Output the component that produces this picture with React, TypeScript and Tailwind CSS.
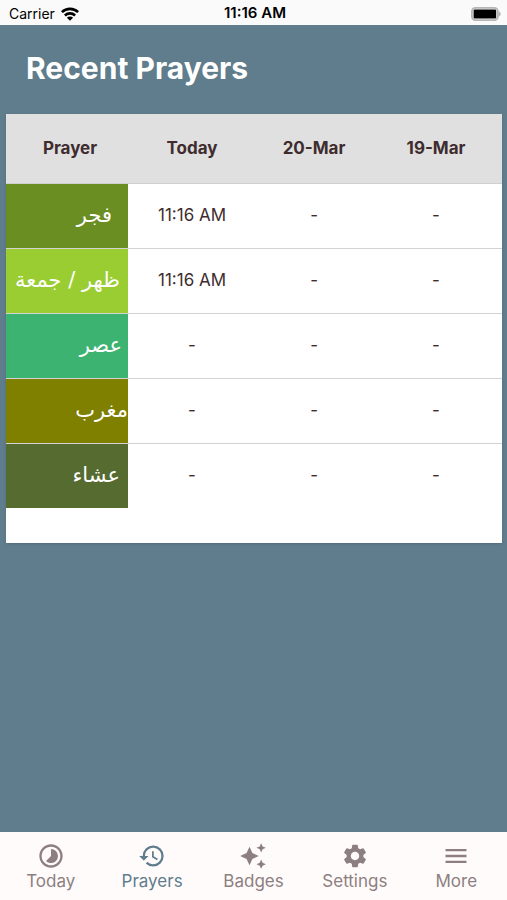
import clsx from "clsx";
import {
  MdAutoAwesome,
  MdHistory,
  MdMenu,
  MdSettings,
  MdTimelapse
} from "react-icons/md";

const days = ["Today", "20-Mar", "19-Mar"];

const prayers = [
  {
    name: "فجر",
    cell: "bg-[#6b8e23] pr-4",
    times: ["11:16 AM", "-", "-"]
  },
  {
    name: "ظهر / جمعة",
    cell: "bg-[#9acd32] pr-2",
    times: ["11:16 AM", "-", "-"]
  },
  {
    name: "عصر",
    cell: "bg-[#3cb371] pr-1.5",
    times: ["-", "-", "-"]
  },
  {
    name: "مغرب",
    cell: "bg-[#808000] pr-0",
    times: ["-", "-", "-"]
  },
  {
    name: "عشاء",
    cell: "bg-[#556b2f] pr-2",
    times: ["-", "-", "-"]
  }
];

const tabs = [
  { icon: MdTimelapse, label: "Today", href: "#today" },
  { icon: MdHistory, label: "Prayers", href: "#prayers" },
  { icon: MdAutoAwesome, label: "Badges", href: "#badges" },
  { icon: MdSettings, label: "Settings", href: "#settings" },
  { icon: MdMenu, label: "More", href: "#more" }
];

const WifiIcon = ({ className }: { className?: string }) => (
  <svg viewBox="0 0 18 14" className={className} aria-hidden="true">
    <g fill="none" stroke="currentColor" strokeWidth="2.6">
      <path d="M0.9 5.2a11.5 11.5 0 0 1 16.2 0" />
      <path d="M3.9 8.5a7.3 7.3 0 0 1 10.2 0" />
    </g>
    <path d="M9 13.8 5.9 10.7a4.4 4.4 0 0 1 6.2 0Z" fill="currentColor" />
  </svg>
);

const BatteryIcon = ({ className }: { className?: string }) => (
  <svg viewBox="0 0 30 14" className={className} aria-hidden="true">
    <rect
      x="0.9"
      y="0.9"
      width="26"
      height="12.2"
      rx="3.6"
      fill="#fafafa"
      stroke="#b5b5b5"
      strokeWidth="1.8"
    />
    <rect x="2.6" y="2.5" width="22.6" height="9" rx="1.2" fill="#000" />
    <path d="M27.8 4.6c2.6.8 2.6 4 0 4.8Z" fill="#b5b5b5" />
  </svg>
);

function StatusBar() {
  return (
    <div className="grid h-[25px] grid-cols-3 items-center bg-[#fafafa] pt-0.5 pr-1.5 pl-[9px] text-black">
      <div className="flex items-center gap-1.5 text-sm">
        Carrier
        <WifiIcon className="h-3.5 w-[18px]" />
      </div>
      <div className="text-center text-[15px] font-semibold">11:16 AM</div>
      <BatteryIcon className="h-3.5 w-[30px] justify-self-end" />
    </div>
  );
}

function PrayerTable() {
  return (
    <div className="bg-white pb-[35px] shadow-sm">
      <table className="w-full table-fixed border-collapse text-center text-[17px] text-[#3e2c2e]">
        <colgroup>
          <col className="w-[24.6%]" />
          <col className="w-[24.6%]" />
          <col className="w-[24.6%]" />
          <col />
        </colgroup>
        <thead>
          <tr className="h-[69px] border-b border-[#cfcfcf] bg-[#e0e0e0]">
            <th className="pl-1.5 font-bold">Prayer</th>
            {days.map((day) => (
              <th key={day} className="pl-1.5 font-bold last:pr-2">
                {day}
              </th>
            ))}
          </tr>
        </thead>
        <tbody>
          {prayers.map((prayer) => (
            <tr
              key={prayer.name}
              className="h-[65px] border-b border-[#d3d3d3] last:border-b-0"
            >
              <th
                dir="rtl"
                scope="row"
                className={clsx(
                  "text-right font-['DejaVu_Sans',sans-serif] text-[21px] font-normal whitespace-nowrap text-white",
                  prayer.cell
                )}
              >
                {prayer.name}
              </th>
              {prayer.times.map((time, i) => (
                <td key={i} className="pl-1.5 last:pr-2">
                  {time}
                </td>
              ))}
            </tr>
          ))}
        </tbody>
      </table>
    </div>
  );
}

function TabBar() {
  return (
    <nav className="grid h-[68px] grid-cols-5 bg-[#fffbfb]">
      {tabs.map((tab) => {
        const Icon = tab.icon;
        const active = tab.label === "Prayers";
        return (
          <a
            key={tab.label}
            href={tab.href}
            aria-current={active ? "page" : undefined}
            className={clsx(
              "flex flex-col items-center pt-2.5 text-[17px] leading-[22px]",
              active ? "text-[#5f7d8c]" : "text-[#8d7f80]"
            )}
          >
            <Icon className="size-7" />
            <span>{tab.label}</span>
          </a>
        );
      })}
    </nav>
  );
}

export default function App() {
  return (
    <div className="flex min-h-screen flex-col bg-[#5f7d8c] font-['Inter',sans-serif]">
      <StatusBar />
      <main className="flex-1 pr-[5px] pl-1.5">
        <h1 className="px-5 pt-[25px] pb-7 text-3xl font-bold text-white">
          Recent Prayers
        </h1>
        <PrayerTable />
      </main>
      <TabBar />
    </div>
  );
}
